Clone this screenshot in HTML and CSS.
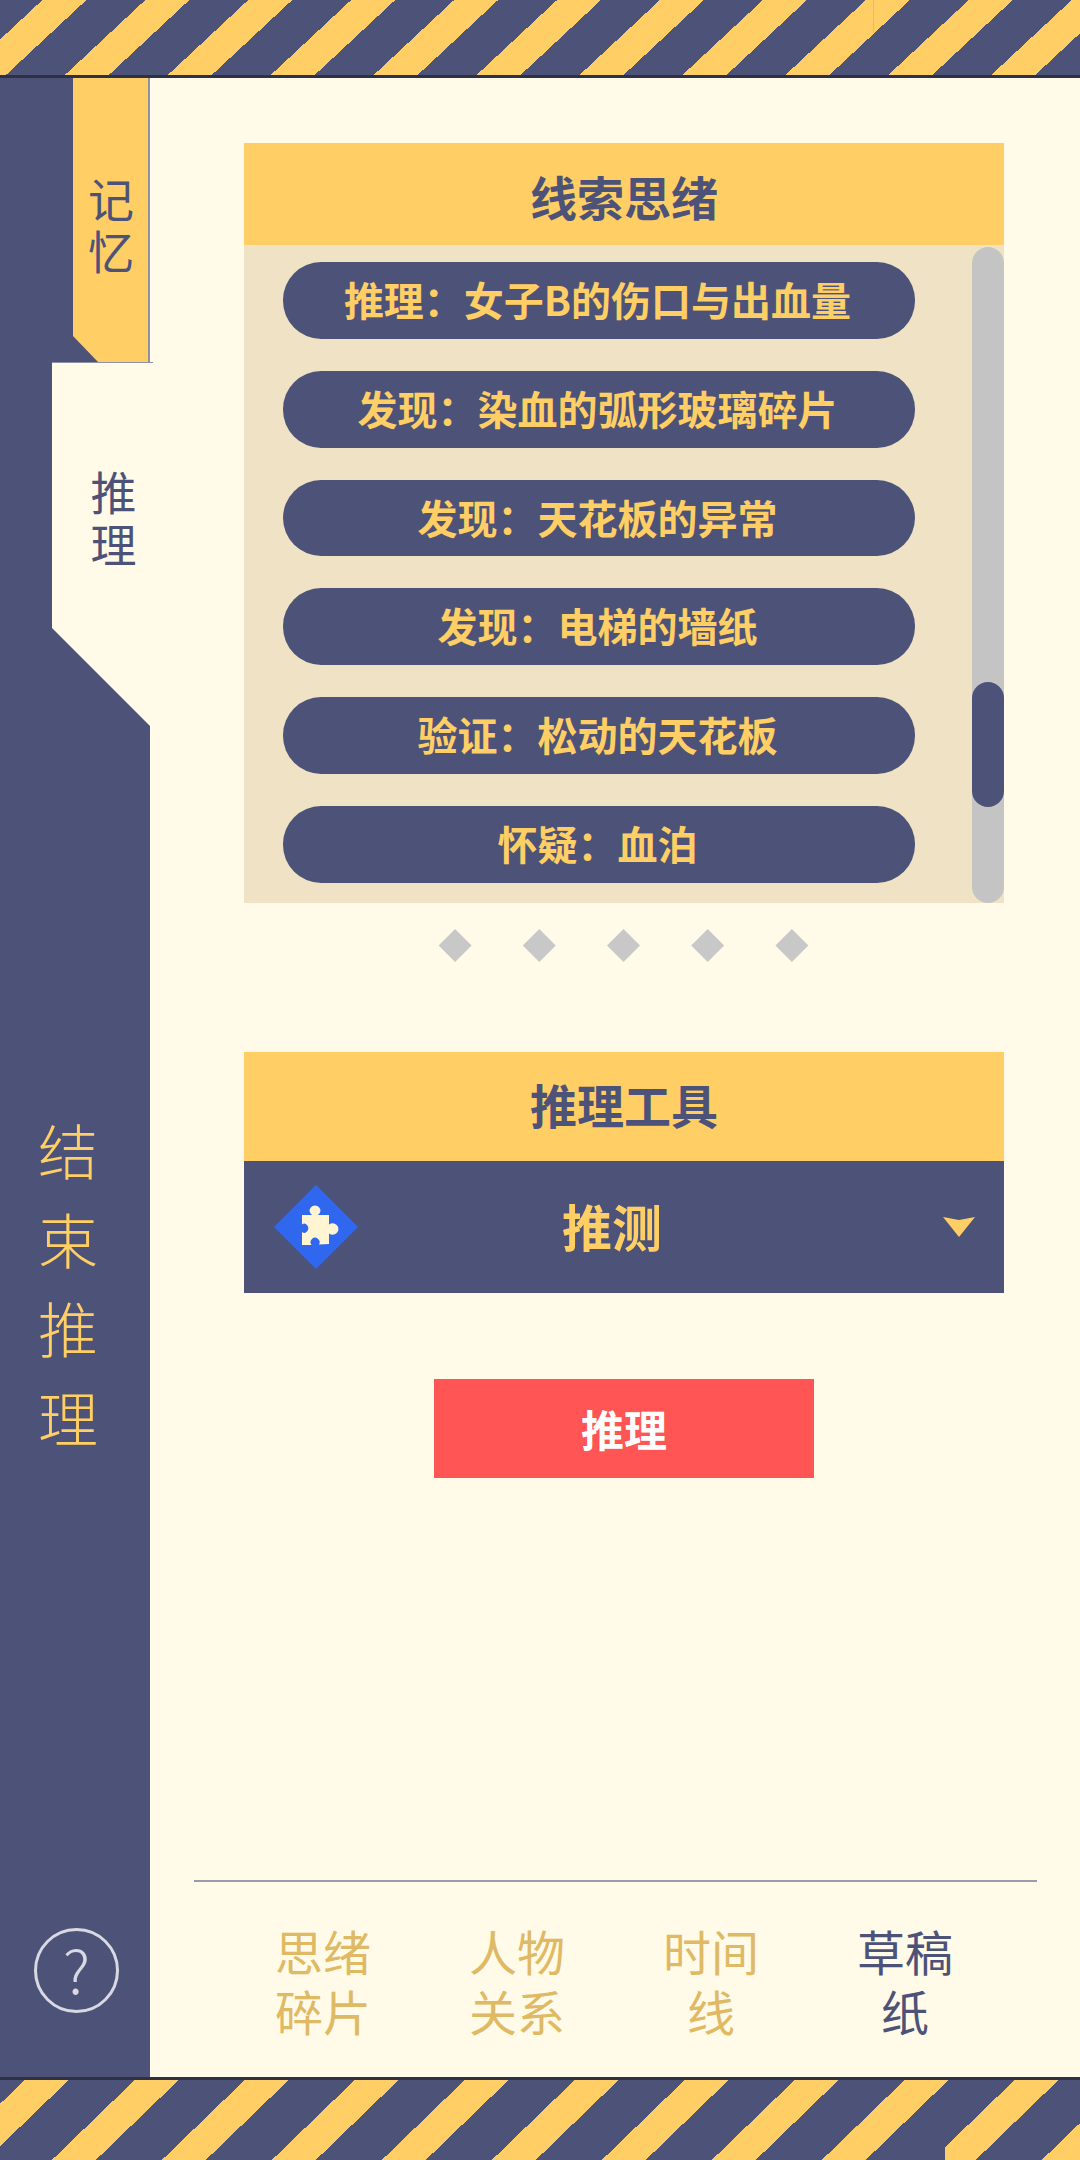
FILE: index.html
```html
<!DOCTYPE html>
<html lang="zh-CN">
<head>
<meta charset="utf-8">
<title>推理</title>
<link rel="stylesheet" href="styles.css">
</head>
<body>
<div class="app">
  <header class="stripes-top"></header>
  <div class="middle">
    <aside class="sidebar">
      <div class="side-tab side-tab-memory">记<br>忆</div>
      <div class="side-tab side-tab-reason">推<br>理</div>
      <div class="side-end">结<br>束<br>推<br>理</div>
      <div class="help">?</div>
    </aside>
    <main class="main">
      <div class="content">
        <section class="panel">
          <h2 class="panel-title panel-title-clues">线索思绪</h2>
          <div class="clue-body">
            <ul class="clue-list">
              <li class="clue">推理：女子B的伤口与出血量</li>
              <li class="clue">发现：染血的弧形玻璃碎片</li>
              <li class="clue">发现：天花板的异常</li>
              <li class="clue">发现：电梯的墙纸</li>
              <li class="clue">验证：松动的天花板</li>
              <li class="clue">怀疑：血泊</li>
            </ul>
            <div class="scroll-track"><div class="scroll-thumb"></div></div>
          </div>
        </section>
        <div class="dots">
          <span class="dot"></span><span class="dot"></span><span class="dot"></span><span class="dot"></span><span class="dot"></span>
        </div>
        <section class="panel panel-tools">
          <h2 class="panel-title panel-title-tools">推理工具</h2>
          <div class="tool-select">
            <svg class="tool-icon" viewBox="0 0 84 84" aria-hidden="true">
              <polygon points="42,0 84,42 42,84 0,42" fill="#2f67ee"/>
              <path fill="#fff5d2" d="M28 30H38.5A5.5 5 0 1 1 43.5 30H55V39.5A6 5.5 0 1 1 55 48.5V59L45 59.5A4.5 4.5 0 1 0 37.5 60L28 60V47A4 4.5 0 1 0 28 39.5Z"/>
            </svg>
            <span class="tool-name">推测</span>
            <svg class="tool-arrow" viewBox="0 0 32 20" aria-hidden="true">
              <polygon points="0,0 16,3 32,0 16,20" fill="#ffce64"/>
            </svg>
          </div>
        </section>
        <button class="reason-btn" type="button">推理</button>
      </div>
      <nav class="footer-tabs">
        <div class="foot-tab">思绪<br>碎片</div>
        <div class="foot-tab">人物<br>关系</div>
        <div class="foot-tab">时间<br>线</div>
        <div class="foot-tab foot-tab-active">草稿<br>纸</div>
      </nav>
    </main>
  </div>
  <footer class="stripes-bottom"></footer>
</div>
</body>
</html>
```
FILE: styles.css
```css
* { box-sizing: border-box; }
html, body { margin: 0; padding: 0; }
body {
  width: 1080px;
  height: 2160px;
  overflow: hidden;
  background: #fffbe8;
  font-family: "Noto Sans CJK SC", "Noto Sans", sans-serif;
  color: #4d5378;
}
.app { display: flex; flex-direction: column; height: 2160px; }

.stripes-top {
  position: relative;
  flex: none;
  height: 78px;
  border-bottom: 3px solid #2e3044;
  background: repeating-linear-gradient(137deg, #4d5378 0, #4d5378 28.9px, #ffce64 28.9px, #ffce64 58.9px, #4d5378 58.9px, #4d5378 70.2px);
}
.stripes-top::after {
  content: "";
  position: absolute;
  left: 873px;
  top: 0;
  width: 1px;
  height: 33px;
  background: #e8bd60;
}
.stripes-bottom {
  position: relative;
  flex: none;
  height: 83px;
  border-top: 3px solid #2e3044;
  background: repeating-linear-gradient(136deg, #4d5378 0, #4d5378 17.2px, #ffce64 17.2px, #ffce64 47.7px, #4d5378 47.7px, #4d5378 76.4px);
}
.stripes-bottom::after {
  content: "";
  position: absolute;
  left: 925px;
  bottom: 0;
  width: 20px;
  height: 16px;
  background: #4d5378;
}

.middle { flex: 1; display: flex; min-height: 0; }

.sidebar {
  flex: none;
  width: 150px;
  background: #4d5378;
  display: flex;
  flex-direction: column;
  align-items: flex-start;
}
.side-tab { text-align: center; font-size: 46px; line-height: 52px; }
.side-tab-memory {
  width: 77px;
  height: 284px;
  margin-left: 73px;
  padding-top: 93px;
  padding-left: 1px;
  background: #ffce64;
  border-right: 2px solid #8f90a0;
  clip-path: polygon(0 0, 100% 0, 100% 100%, 25px 100%, 0 258px);
}
.side-tab-reason {
  position: relative;
  z-index: 1;
  width: 101px;
  height: 367px;
  margin-left: 52px;
  padding-top: 101px;
  padding-left: 22px;
  background: #fffbe8;
  border-top: 1px solid #8d90a6;
  clip-path: polygon(0 0, 100% 0, 100% 100%, 0 266px);
}
.side-end {
  width: 136px;
  margin-top: 375px;
  text-align: center;
  font-size: 60px;
  font-weight: 300;
  line-height: 89px;
  color: #ffce64;
}
.help {
  width: 85px;
  height: 85px;
  margin: auto 0 64px 34px;
  border: 3px solid #d9d9e3;
  border-radius: 50%;
  text-align: center;
  font-size: 60px;
  font-weight: 300;
  line-height: 74px;
  color: #d9d9e3;
}

.main { flex: 1; display: flex; flex-direction: column; min-width: 0; }
.content { flex: 1; padding: 65px 76px 0 94px; display: flex; flex-direction: column; }

.panel { flex: none; }
.panel-title {
  margin: 0;
  background: #ffce64;
  text-align: center;
  font-size: 47px;
  font-weight: 700;
}
.panel-title-clues { height: 102px; line-height: 105px; }
.panel-title-tools { height: 109px; line-height: 103px; }

.clue-body { display: flex; height: 658px; background: #f0e3c5; }
.clue-list {
  flex: 1;
  list-style: none;
  margin: 0;
  padding: 17px 57px 0 39px;
  display: flex;
  flex-direction: column;
  gap: 32px;
}
.clue {
  height: 76.8px;
  padding-right: 3px;
  border-radius: 38px;
  background: #4d5378;
  color: #ffce64;
  text-align: center;
  font-size: 40px;
  font-weight: 700;
  line-height: 75px;
  white-space: nowrap;
}
.scroll-track {
  flex: none;
  width: 32px;
  margin-top: 2px;
  border-radius: 16px;
  background: #c4c4c4;
  padding-top: 435px;
}
.scroll-thumb { height: 125px; border-radius: 16px; background: #4d5378; }

.dots { flex: none; display: flex; justify-content: center; gap: 51.2px; margin-top: 26px; padding-right: 1px; }
.dot { width: 33px; height: 33px; background: #c8c8c8; clip-path: polygon(50% 0, 100% 50%, 50% 100%, 0 50%); }

.panel-tools { margin-top: 90px; }
.tool-select {
  position: relative;
  height: 132px;
  background: #4d5378;
  display: flex;
  align-items: center;
  justify-content: center;
}
.tool-icon { position: absolute; left: 30px; top: 24px; width: 84px; height: 84px; }
.tool-name { font-size: 50px; font-weight: 700; line-height: 1; color: #ffce64; margin: 0 24px 4px 0; }
.tool-arrow { position: absolute; right: 29px; top: 56px; width: 32px; height: 20px; }

.reason-btn {
  flex: none;
  align-self: center;
  width: 380px;
  height: 99px;
  margin-top: 86px;
  border: 0;
  padding: 0 0 2px;
  background: #ff5555;
  color: #fff;
  font-family: inherit;
  font-size: 43px;
  font-weight: 700;
}

.footer-tabs {
  flex: none;
  margin: 0 43px 0 44px;
  padding: 38px 0 37px 32px;
  border-top: 2px solid #9a9cae;
  display: grid;
  grid-template-columns: repeat(4, 194px);
}
.foot-tab { text-align: center; font-size: 48px; line-height: 60px; color: #dfb964; }
.foot-tab-active { color: #4d5378; }
```
